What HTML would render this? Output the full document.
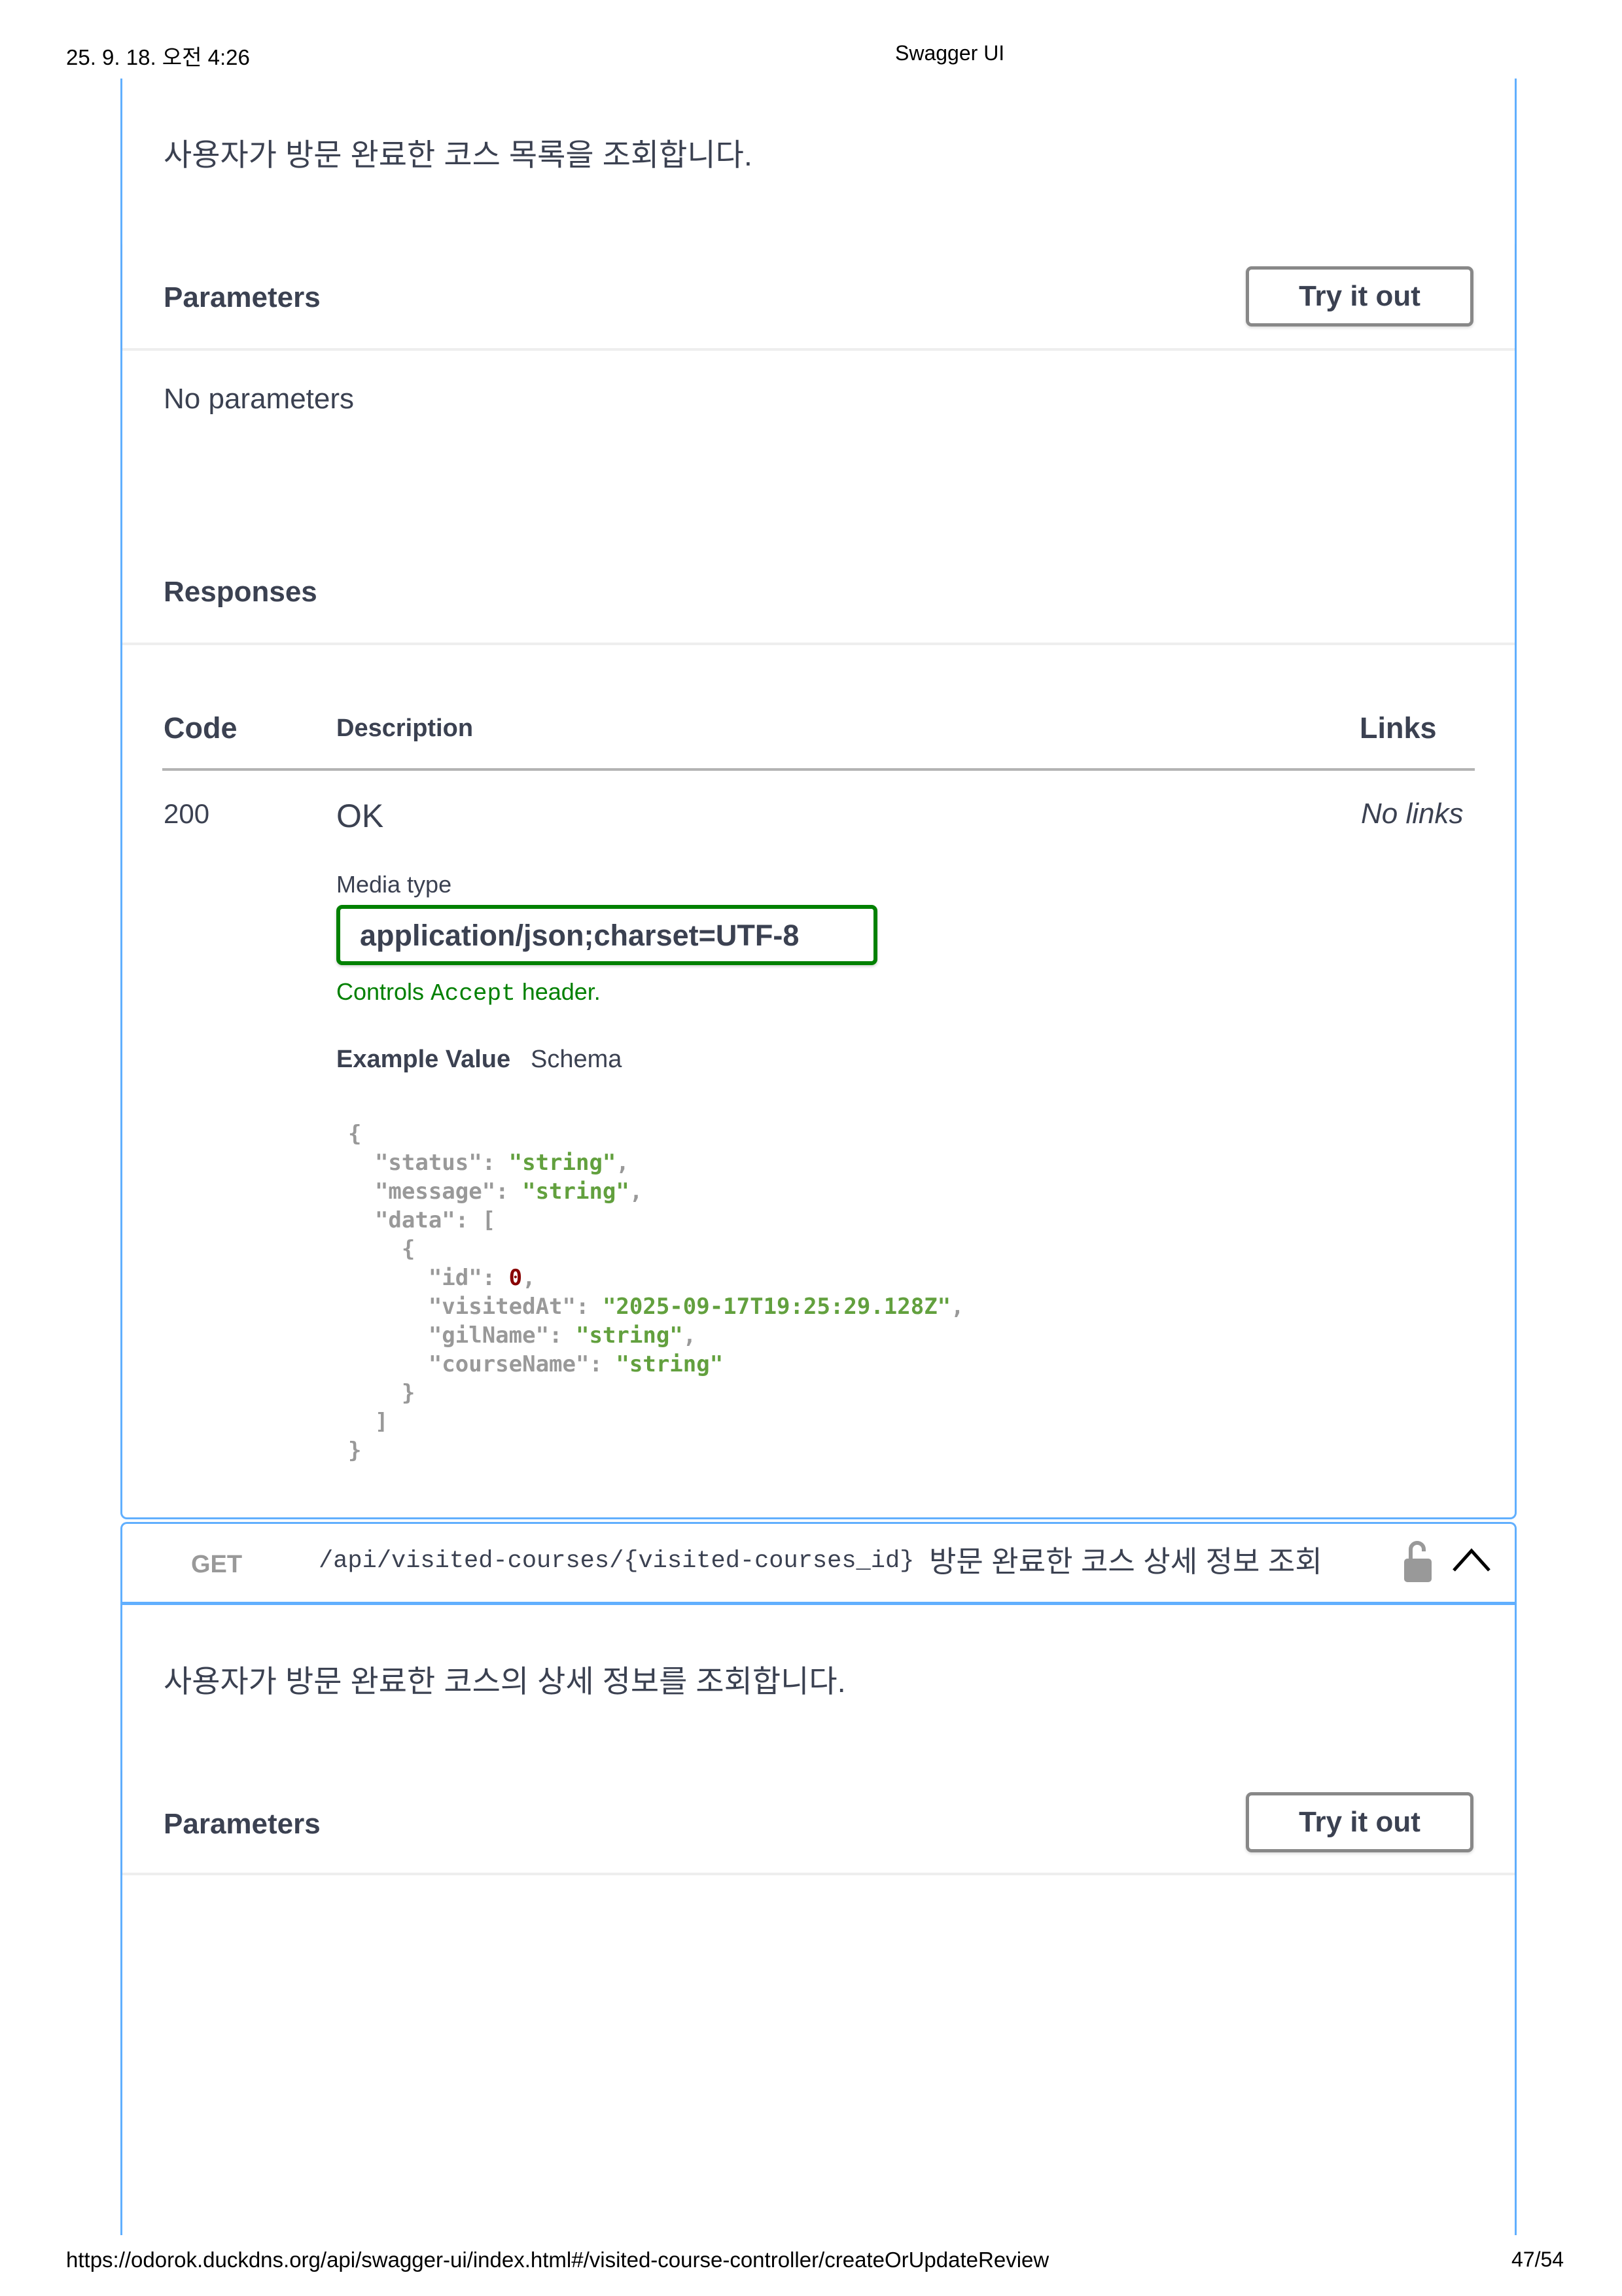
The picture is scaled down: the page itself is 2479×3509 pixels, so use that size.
<!DOCTYPE html>
<html><head><meta charset="utf-8">
<style>
body{margin:0;width:2479px;height:3509px;position:relative;background:#fff;font-family:"Liberation Sans","Noto Sans CJK KR",sans-serif;color:#3b4151;overflow:hidden}
.a{position:absolute;white-space:nowrap;line-height:1}
.m{font-family:"Liberation Mono","DejaVu Sans Mono",monospace}
.btn{position:absolute;border:5px solid #888;border-radius:9px;box-sizing:border-box;font-weight:bold;font-size:44px;display:flex;align-items:center;justify-content:center;color:#3b4151;box-shadow:0 2px 5px rgba(0,0,0,.15)}
.sep{position:absolute;left:187px;width:2128px;height:4px;background:#eee}
.code{position:absolute;left:532px;top:1711px;font-family:"DejaVu Sans Mono",monospace;font-size:34px;line-height:44px;font-weight:bold;color:#999;white-space:pre}
.s{color:#62a03e}.n{color:#800}
</style></head><body>
<div class="a" style="left:101px;top:71px;font-size:33px;color:#000">25. 9. 18. 오전 4:26</div>
<div class="a" style="left:1368px;top:65px;font-size:32px;color:#000">Swagger UI</div>

<!-- first block -->
<div style="position:absolute;left:184px;top:120px;width:2134px;height:2202px;border:3px solid #61affe;border-top:none;border-radius:0 0 10px 10px;box-sizing:border-box"></div>
<div class="a" style="left:250px;top:213px;font-size:47px">사용자가 방문 완료한 코스 목록을 조회합니다.</div>
<div style="position:absolute;left:187px;top:372px;width:2128px;height:162px;background:rgba(255,255,255,.8);box-shadow:0 1px 2px rgba(0,0,0,.08)"></div>
<div class="a" style="left:250px;top:433px;font-size:44px;font-weight:bold">Parameters</div>
<div class="btn" style="left:1904px;top:407px;width:348px;height:92px">Try it out</div>
<div class="sep" style="top:532px"></div>
<div class="a" style="left:250px;top:588px;font-size:44px">No parameters</div>
<div class="a" style="left:250px;top:883px;font-size:44px;font-weight:bold">Responses</div>
<div class="sep" style="top:982px"></div>
<div class="a" style="left:250px;top:1090px;font-size:45px;font-weight:bold">Code</div>
<div class="a" style="left:514px;top:1094px;font-size:38px;font-weight:bold">Description</div>
<div class="a" style="left:2078px;top:1090px;font-size:45px;font-weight:bold">Links</div>
<div style="position:absolute;left:248px;top:1174px;width:2006px;height:4px;background:#b3b3b3"></div>
<div class="a" style="left:250px;top:1223px;font-size:42px">200</div>
<div class="a" style="left:514px;top:1222px;font-size:50px">OK</div>
<div class="a" style="left:2080px;top:1222px;font-size:44px;font-style:italic">No links</div>
<div class="a" style="left:514px;top:1334px;font-size:36px">Media type</div>
<div style="position:absolute;left:514px;top:1383px;width:827px;height:92px;border:6px solid #008000;border-radius:9px;box-sizing:border-box;box-shadow:0 2px 4px rgba(0,0,0,.2)"></div>
<div class="a" style="left:550px;top:1407px;font-size:45px;font-weight:bold">application/json;charset=UTF-8</div>
<div class="a" style="left:514px;top:1498px;font-size:36px;color:#008000">Controls <span class="m">Accept</span> header.</div>
<div class="a" style="left:514px;top:1600px;font-size:38px;font-weight:bold">Example Value</div>
<div class="a" style="left:811px;top:1600px;font-size:38px">Schema</div>
<div class="code">{
  "status": <span class="s">"string"</span>,
  "message": <span class="s">"string"</span>,
  "data": [
    {
      "id": <span class="n">0</span>,
      "visitedAt": <span class="s">"2025-09-17T19:25:29.128Z"</span>,
      "gilName": <span class="s">"string"</span>,
      "courseName": <span class="s">"string"</span>
    }
  ]
}</div>

<!-- second block -->
<div style="position:absolute;left:184px;top:2326px;width:2134px;height:1090px;border:3px solid #61affe;border-bottom:none;border-radius:10px 10px 0 0;box-sizing:border-box"></div>
<div style="position:absolute;left:187px;top:2448px;width:2128px;height:5px;background:#61affe"></div>
<div class="a" style="left:292px;top:2372px;font-size:38px;font-weight:bold;color:#999">GET</div>
<div class="a m" style="left:487px;top:2368px;font-size:37px;color:#3b4151">/api/visited-courses/{visited-courses_id}</div>
<div class="a" style="left:1420px;top:2364px;font-size:45px">방문 완료한 코스 상세 정보 조회</div>
<svg style="position:absolute;left:2142px;top:2352px" width="50" height="70" viewBox="0 0 50 70"><path d="M14 30V16a10 10 0 0 1 20 0v3" fill="none" stroke="#999" stroke-width="6"/><rect x="4" y="30" width="42" height="36" rx="5" fill="#999"/></svg>
<svg style="position:absolute;left:2218px;top:2362px" width="62" height="44" viewBox="0 0 62 44"><path d="M4 38L31 8l27 30" fill="none" stroke="#000" stroke-width="5"/></svg>
<div class="a" style="left:250px;top:2546px;font-size:47px">사용자가 방문 완료한 코스의 상세 정보를 조회합니다.</div>
<div style="position:absolute;left:187px;top:2704px;width:2128px;height:160px;background:rgba(255,255,255,.8);box-shadow:0 1px 2px rgba(0,0,0,.08)"></div>
<div class="a" style="left:250px;top:2766px;font-size:44px;font-weight:bold">Parameters</div>
<div class="btn" style="left:1904px;top:2739px;width:348px;height:92px">Try it out</div>
<div class="sep" style="top:2862px"></div>

<div class="a" style="left:101px;top:3437px;font-size:33px;color:#000">https://odorok.duckdns.org/api/swagger-ui/index.html#/visited-course-controller/createOrUpdateReview</div>
<div class="a" style="left:2310px;top:3437px;font-size:32px;color:#000">47/54</div>
</body></html>
